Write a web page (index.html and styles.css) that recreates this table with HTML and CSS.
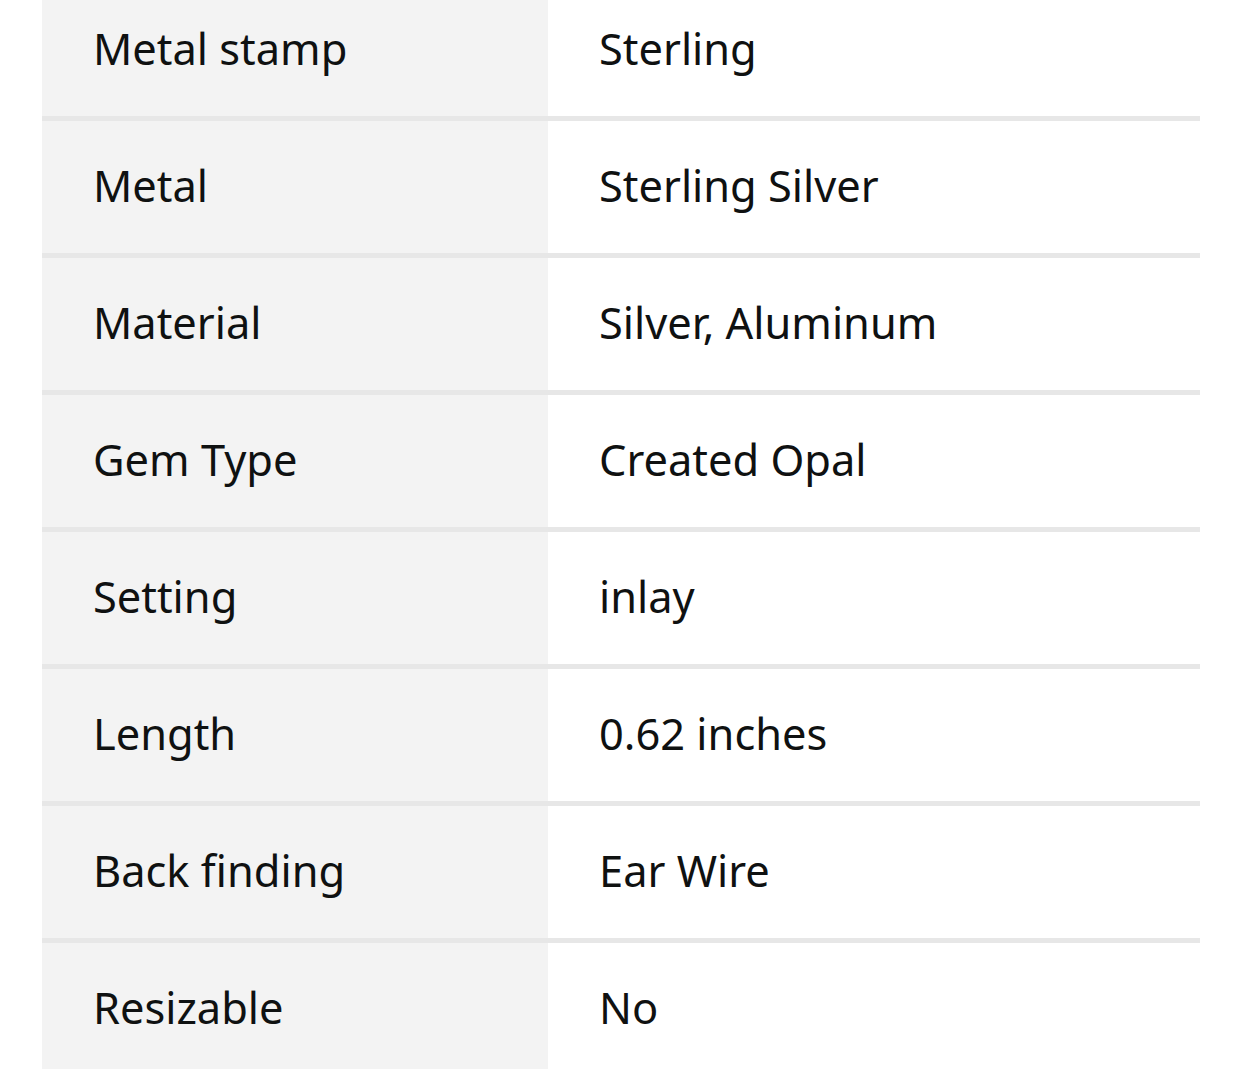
FILE: index.html
```html
<!DOCTYPE html>
<html>
<head>
<meta charset="utf-8">
<link rel="stylesheet" href="styles.css">
</head>
<body>
<div class="specs">
  <div class="row"><div class="label">Metal stamp</div><div class="value">Sterling</div></div>
  <div class="row"><div class="label">Metal</div><div class="value">Sterling Silver</div></div>
  <div class="row"><div class="label">Material</div><div class="value">Silver, Aluminum</div></div>
  <div class="row"><div class="label">Gem Type</div><div class="value">Created Opal</div></div>
  <div class="row"><div class="label">Setting</div><div class="value">inlay</div></div>
  <div class="row"><div class="label">Length</div><div class="value">0.62 inches</div></div>
  <div class="row"><div class="label">Back finding</div><div class="value">Ear Wire</div></div>
  <div class="row"><div class="label">Resizable</div><div class="value">No</div></div>
</div>
</body>
</html>
```
FILE: styles.css
```css
html, body {
  margin: 0;
  padding: 0;
  background: #ffffff;
  overflow: hidden;
}
body {
  font-family: "Noto Sans", "Open Sans", sans-serif;
  color: #0f1111;
}
.specs {
  margin: -16px 42px 0 42px;
  width: 1158px;
}
.row {
  display: grid;
  grid-template-columns: 506px 652px;
  height: 132px;
  border-bottom: 5px solid #e7e7e7;
}
.label, .value {
  display: flex;
  align-items: center;
  padding-left: 51px;
  padding-bottom: 3px;
  font-size: 43.4px;
  line-height: 1;
}
.label {
  background: #f3f3f3;
}
.value {
  background: #ffffff;
}
```
